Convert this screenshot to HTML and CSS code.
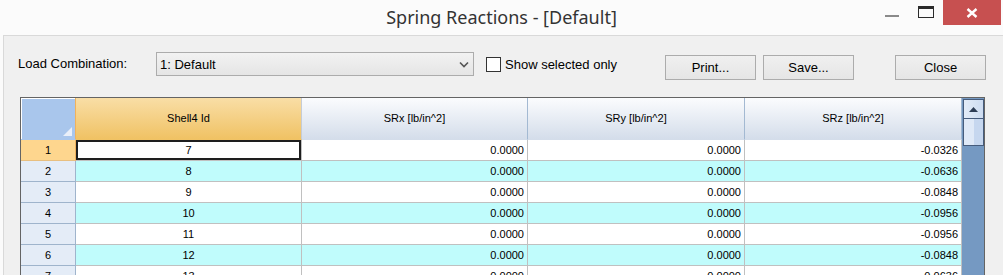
FILE: index.html
```html
<!DOCTYPE html>
<html lang="en">
<head>
  <meta charset="UTF-8">
  <title>Spring Reactions - [Default]</title>
  <link rel="stylesheet" href="styles.css">
</head>
<body>
  <!-- window caption -->
  <div class="titlebar">
    <div></div>
    <div class="title">Spring Reactions - [Default]</div>
    <div class="controls">
      <div class="min"></div>
      <div class="max"></div>
      <div class="close">
        <svg width="12" height="10" viewBox="0 0 12 10"><path d="M1.5 1 L10.5 9 M10.5 1 L1.5 9" stroke="#fff" stroke-width="2.4" fill="none"/></svg>
      </div>
    </div>
  </div>

  <div class="frame">
    <div class="toolbar">
      <label class="lbl">Load Combination:</label>
      <div class="combo">
        <span>1: Default</span>
        <svg width="10" height="7" viewBox="0 0 10 7"><path d="M1 1.5 L5 5.5 L9 1.5" stroke="#555" stroke-width="1.6" fill="none"/></svg>
      </div>
      <div class="check">
        <span class="box"></span>
        <span>Show selected only</span>
      </div>
      <button class="btn">Print...</button>
      <button class="btn btn-save">Save...</button>
      <button class="btn btn-close">Close</button>
    </div>

    <div class="grid">
      <div class="table">
        <div class="corner">
          <svg width="9" height="9" viewBox="0 0 9 9"><path d="M9 0 L9 9 L0 9 Z" fill="#e9eff9"/></svg>
        </div>
        <div class="colhead sel">Shell4 Id</div>
        <div class="colhead">SRx [lb/in^2]</div>
        <div class="colhead">SRy [lb/in^2]</div>
        <div class="colhead">SRz [lb/in^2]</div>

        <div class="rowhead sel">1</div>
        <div class="cell mid focus">7</div>
        <div class="cell">0.0000</div>
        <div class="cell">0.0000</div>
        <div class="cell">-0.0326</div>

        <div class="rowhead">2</div>
        <div class="cell mid alt">8</div>
        <div class="cell alt">0.0000</div>
        <div class="cell alt">0.0000</div>
        <div class="cell alt">-0.0636</div>

        <div class="rowhead">3</div>
        <div class="cell mid">9</div>
        <div class="cell">0.0000</div>
        <div class="cell">0.0000</div>
        <div class="cell">-0.0848</div>

        <div class="rowhead">4</div>
        <div class="cell mid alt">10</div>
        <div class="cell alt">0.0000</div>
        <div class="cell alt">0.0000</div>
        <div class="cell alt">-0.0956</div>

        <div class="rowhead">5</div>
        <div class="cell mid">11</div>
        <div class="cell">0.0000</div>
        <div class="cell">0.0000</div>
        <div class="cell">-0.0956</div>

        <div class="rowhead">6</div>
        <div class="cell mid alt">12</div>
        <div class="cell alt">0.0000</div>
        <div class="cell alt">0.0000</div>
        <div class="cell alt">-0.0848</div>

        <div class="rowhead">7</div>
        <div class="cell mid">13</div>
        <div class="cell">0.0000</div>
        <div class="cell">0.0000</div>
        <div class="cell">-0.0636</div>
      </div>

      <div class="scrollbar">
        <div class="sb-up">
          <svg width="9" height="5" viewBox="0 0 9 5"><path d="M0 5 L4.5 0 L9 5 Z" fill="#2d3d55"/></svg>
        </div>
        <div class="sb-thumb"></div>
      </div>
    </div>
  </div>
</body>
</html>
```

FILE: styles.css
```css
* {
  margin: 0;
  padding: 0;
  box-sizing: border-box;
}

body {
  width: 1003px;
  height: 275px;
  overflow: hidden;
  background: #fbfbfb;
  font-family: "Liberation Sans", Arial, sans-serif;
  font-size: 13px;
  color: #000;
}

/* caption bar */
.titlebar {
  height: 35px;
  display: grid;
  grid-template-columns: 1fr auto 1fr;
}

.title {
  font-family: "Noto Sans", sans-serif;
  font-size: 18px;
  color: #333;
  line-height: 35px;
}

.controls {
  justify-self: end;
  display: flex;
  align-items: flex-start;
  margin-right: 2px;
}

.min {
  width: 14px;
  height: 2px;
  background: #8a8a8a;
  margin-top: 15px;
  margin-right: 19px;
}

.max {
  width: 16px;
  height: 12px;
  border: 1px solid #2b2b2b;
  border-top-width: 3px;
  margin-top: 6px;
  margin-right: 9px;
}

.close {
  width: 58px;
  height: 25px;
  background: #c75050;
  display: flex;
  align-items: center;
  justify-content: center;
}

/* dialog body */
.frame {
  margin-left: 3px;
  height: 240px;
  border-left: 1px solid #d9d9d9;
  border-top: 1px solid #d9d9d9;
  background: #f0f0f0;
  padding-left: 14px;
  overflow: hidden;
}

.toolbar {
  height: 61px;
  padding-top: 16px;
  display: flex;
  align-items: flex-start;
}

.lbl {
  width: 138px;
  line-height: 24px;
}

.combo {
  width: 318px;
  height: 24px;
  border: 1px solid #acacac;
  background: linear-gradient(#f2f2f2, #e5e5e5);
  display: flex;
  align-items: center;
  justify-content: space-between;
  padding: 0 4px 0 3px;
}

.check {
  width: 179px;
  height: 24px;
  margin-left: 12px;
  display: flex;
  align-items: center;
}

.box {
  width: 15px;
  height: 15px;
  border: 1px solid #333;
  background: #fff;
  margin-right: 4px;
  margin-top: 1px;
}

.btn {
  width: 91px;
  height: 25px;
  margin-top: 3px;
  border: 1px solid #acacac;
  background: linear-gradient(#f0f0f0, #e5e5e5);
  font-family: "Liberation Sans", Arial, sans-serif;
  font-size: 13px;
  color: #000;
}

.btn-save {
  margin-left: 7px;
}

.btn-close {
  margin-left: 41px;
}

/* data grid */
.grid {
  margin-left: 2px;
  width: 965px;
  height: 200px;
  border: 1px solid #646464;
  border-bottom: none;
  display: flex;
  background: #fff;
}

.table {
  display: grid;
  grid-template-columns: 55px 226px 226px 217px 217px;
  grid-template-rows: 42px repeat(7, 21px);
  font-size: 11px;
}

.corner {
  background: #a9c6ec;
  box-shadow: inset 1px 1px 0 #fff;
  border-right: 1px solid #f0b25c;
  border-bottom: 1px solid #a9c6ec;
  display: flex;
  align-items: flex-end;
  justify-content: flex-end;
  padding: 0 3px 3px 0;
}

.colhead {
  background: linear-gradient(#fbfcfe, #d4ddea);
  border-right: 1px solid #a3b9d2;
  border-bottom: 1px solid #d4ddea;
  text-align: center;
  line-height: 41px;
}

.colhead.sel {
  background: linear-gradient(#f9dea6, #f0c264);
  border-right-color: #c5ccd6;
  border-bottom-color: #f0c264;
}

.rowhead {
  background: #e4ecf7;
  border-right: 1px solid #9fb4cc;
  border-bottom: 1px solid #9fb4cc;
  text-align: center;
  line-height: 20px;
}

.rowhead.sel {
  background: #fed68e;
  border-right-color: #f0b25c;
  border-bottom-color: #e8bf80;
}

.cell {
  background: #fff;
  border-right: 1px solid #c0c0c0;
  border-bottom: 1px solid #c0c0c0;
  text-align: right;
  padding-right: 3px;
  line-height: 20px;
}

.cell.alt {
  background: #c0fcfc;
}

.cell.mid {
  text-align: center;
  padding-right: 0;
}

.cell.focus {
  box-shadow: inset 0 0 0 2px #1e1e1e;
}

/* vertical scrollbar */
.scrollbar {
  width: 22px;
  background: #7599c2;
  padding: 1px 0 0 1px;
}

.sb-up {
  height: 20px;
  border: 1px solid #465c7c;
  background: linear-gradient(90deg, #e3ecf8, #cddcf1);
  display: flex;
  align-items: center;
  justify-content: center;
}

.sb-thumb {
  height: 27px;
  border: 1px solid #465c7c;
  border-top: none;
  background: linear-gradient(90deg, #dfe9f7 50%, #c6d7ef 50%);
}
```
